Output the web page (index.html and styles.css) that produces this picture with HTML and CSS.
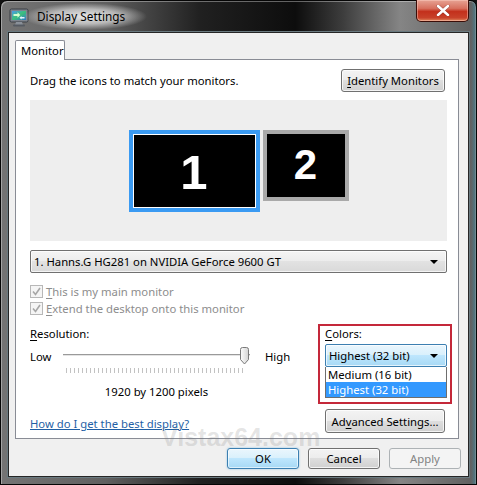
FILE: index.html
```html
<!DOCTYPE html>
<html lang="en">
<head>
    <meta charset="UTF-8">
    <title>Display Settings</title>
    <link rel="stylesheet" href="styles.css">
</head>
<body>
    <div class="window">
        <div class="titlebar">
            <svg class="app-icon" width="20" height="19" viewBox="0 0 20 19">
                <defs>
                    <linearGradient id="scr" x1="0" y1="0" x2="1" y2="1">
                        <stop offset="0" stop-color="#4a9ae8"/>
                        <stop offset="0.5" stop-color="#3cc07a"/>
                        <stop offset="1" stop-color="#2a72c8"/>
                    </linearGradient>
                </defs>
                <rect x="1" y="1" width="18" height="13" rx="1.5" fill="#7d848e" stroke="#3a3e45"/>
                <rect x="3" y="3" width="14" height="9" fill="url(#scr)"/>
                <path d="M4.5 6 h4 v-1.8 l2.8 2.8 l-2.8 2.8 v-1.8 h-4 z" fill="#d6ffd0"/>
                <path d="M15.5 9 h-3 v-1 l-2 1.7 l2 1.7 v-1 h3 z" fill="#e4f2ff"/>
                <path d="M7 14 h6 l1 3 h-8 z" fill="#8a9099"/>
                <rect x="4" y="16.5" width="12" height="2" rx="1" fill="#555a62"/>
            </svg>
            <span class="title">Display Settings</span>
            <div class="close">
                <svg width="14" height="11" viewBox="0 0 14 11">
                    <path d="M2 1 L12 10 M12 1 L2 10" stroke="#5a1010" stroke-width="3.6" stroke-linecap="round" opacity="0.45"/>
                    <path d="M2 1 L12 10 M12 1 L2 10" stroke="#ffffff" stroke-width="2.6" stroke-linecap="round"/>
                </svg>
            </div>
        </div>

        <div class="client">
            <div class="tabs">
                <div class="tab">Monitor</div>
            </div>

            <div class="panel">
                <div class="top-row">
                    <span>Drag the icons to match your monitors.</span>
                    <button class="btn btn-identify"><u>I</u>dentify Monitors</button>
                </div>

                <div class="arrange">
                    <div class="monitors">
                        <div class="monitor monitor-main">1</div>
                        <div class="monitor monitor-second">2</div>
                    </div>
                </div>

                <div class="combo">
                    <span>1. Hanns.G HG281 on NVIDIA GeForce 9600 GT</span>
                    <span class="arrow"></span>
                </div>

                <div class="checks">
                    <div class="check">
                        <span class="box">
                            <svg width="9" height="9" viewBox="0 0 9 9"><path d="M1 4.5 L3.5 7.5 L8 1" fill="none" stroke="#a7a7a7" stroke-width="1.6"/></svg>
                        </span>
                        <span><u>T</u>his is my main monitor</span>
                    </div>
                    <div class="check">
                        <span class="box">
                            <svg width="9" height="9" viewBox="0 0 9 9"><path d="M1 4.5 L3.5 7.5 L8 1" fill="none" stroke="#a7a7a7" stroke-width="1.6"/></svg>
                        </span>
                        <span><u>E</u>xtend the desktop onto this monitor</span>
                    </div>
                </div>

                <div class="lower">
                    <div class="resolution">
                        <div class="label"><u>R</u>esolution:</div>
                        <div class="slider-row">
                            <span class="slider-end">Low</span>
                            <div class="slider">
                                <div class="track"></div>
                                <svg class="thumb" width="11" height="18" viewBox="0 0 11 18">
                                    <defs>
                                        <linearGradient id="thm" x1="0" y1="0" x2="1" y2="0">
                                            <stop offset="0" stop-color="#fdfdfd"/>
                                            <stop offset="1" stop-color="#d4d4d4"/>
                                        </linearGradient>
                                    </defs>
                                    <path d="M1.5 2.5 Q1.5 0.5 3.5 0.5 H7.5 Q9.5 0.5 9.5 2.5 V12.5 L5.5 17 L1.5 12.5 Z" fill="url(#thm)" stroke="#7a7a7a"/>
                                </svg>
                                <div class="ticks"></div>
                            </div>
                            <span>High</span>
                        </div>
                        <div class="pixels">1920 by 1200 pixels</div>
                        <a class="help" href="#">How do I get the best display?</a>
                    </div>

                    <div class="side">
                        <div class="colors">
                            <div class="label"><u>C</u>olors:</div>
                            <div class="combo combo-focus">
                                <span>Highest (32 bit)</span>
                                <span class="arrow"></span>
                            </div>
                            <ul class="list">
                                <li>Medium (16 bit)</li>
                                <li class="selected">Highest (32 bit)</li>
                            </ul>
                        </div>
                        <button class="btn btn-advanced">Ad<u>v</u>anced Settings...</button>
                    </div>
                </div>
            </div>

            <div class="buttons">
                <button class="btn btn-dialog btn-default">OK</button>
                <button class="btn btn-dialog">Cancel</button>
                <button class="btn btn-dialog" disabled>Apply</button>
            </div>

            <div class="watermark">Vistax64.com</div>
        </div>
    </div>
</body>
</html>
```

FILE: styles.css
```css
* {
    margin: 0;
    padding: 0;
    box-sizing: border-box;
}

body {
    width: 477px;
    height: 485px;
    overflow: hidden;
    background: #111;
    font-family: 'Noto Sans', 'Open Sans', sans-serif;
    font-size: 11.3px;
    color: #000;
}

u {
    text-decoration: underline;
    text-underline-offset: 2px;
}

.window {
    width: 477px;
    height: 485px;
    display: flex;
    flex-direction: column;
    border: 1px solid #050505;
    border-radius: 7px 7px 0 0;
    background:
        linear-gradient(90deg, rgba(0, 0, 0, 0) 0, rgba(0, 0, 0, 0) 470px, rgba(70, 140, 160, 0.55) 474px, rgba(0, 0, 0, 0.2) 476px),
        linear-gradient(90deg, #747474 0, #606060 22%, #202020 42%, #0d0d0d 62%, #3d3d3d 72%, #858585 84%, #5e5e5e 100%);
    box-shadow: inset 1px 1px 0 rgba(255, 255, 255, 0.35), inset -1px 0 0 rgba(255, 255, 255, 0.2);
}

/* title bar */

.titlebar {
    height: 31px;
    display: flex;
    align-items: flex-start;
    padding: 0 7px 0 8px;
}

.app-icon {
    margin-top: 7px;
    flex-shrink: 0;
}

.title {
    margin: 2px 0 0 -6px;
    padding: 5px 22px 6px 14px;
    font-size: 11.8px;
    color: #000;
    background: radial-gradient(ellipse closest-side, rgba(238, 238, 238, 0.95) 0%, rgba(218, 218, 218, 0.72) 55%, rgba(200, 200, 200, 0) 100%);
}

.close {
    margin-left: auto;
    margin-top: -1px;
    width: 53px;
    height: 22px;
    display: flex;
    align-items: center;
    justify-content: center;
    border: 1px solid #3a0d08;
    border-top: none;
    border-radius: 0 0 5px 5px;
    background: linear-gradient(#e7a394 0%, #d7705e 40%, #c3301c 55%, #c8422a 85%, #e08a60 100%);
    box-shadow: inset 0 0 0 1px rgba(255, 210, 200, 0.45);
}

/* client area */

.client {
    flex: 1;
    position: relative;
    margin: 0 7px 7px;
    padding: 7px 9px 0 6px;
    background: #f0f0f0;
    border: 1px solid #262626;
    box-shadow: 0 0 0 1px #6a7a80;
}

.tabs {
    display: flex;
    position: relative;
    z-index: 1;
}

.tab {
    width: 50px;
    height: 20px;
    padding: 1px 0 0 5px;
    line-height: 17px;
    background: #fff;
    border: 1px solid #898c95;
    border-bottom: none;
    border-radius: 2px 2px 0 0;
}

.panel {
    height: 380px;
    margin-top: -1px;
    padding: 9px 11px 0 14px;
    background: #fff;
    border: 1px solid #898c95;
    display: flex;
    flex-direction: column;
}

.top-row {
    height: 23px;
    display: flex;
    align-items: center;
    justify-content: space-between;
    padding-right: 2px;
}

/* buttons */

.btn {
    font: inherit;
    color: #000;
    height: 23px;
    border: 1px solid #707070;
    border-radius: 3px;
    background: linear-gradient(#f3f3f3 0%, #ececec 48%, #dedede 50%, #d0d0d0 100%);
    box-shadow: inset 0 0 0 1px rgba(255, 255, 255, 0.75);
}

.btn-identify {
    width: 104px;
}

.btn-advanced {
    width: 120px;
    height: 24px;
    margin: 5px 0 0 7px;
}

.btn-dialog {
    width: 72px;
    height: 21px;
}

.btn-default {
    border-color: #3c7fb1;
    background: linear-gradient(#eaf6fd 0%, #d9f0fc 48%, #bee6fd 50%, #a7d9f5 100%);
    box-shadow: inset 0 0 0 1px rgba(255, 255, 255, 0.6), 0 0 2px rgba(60, 160, 220, 0.6);
}

.btn:disabled {
    color: #838383;
    border-color: #adb2b5;
    background: #f4f4f4;
    box-shadow: none;
}

/* monitor arrangement */

.arrange {
    height: 141px;
    margin-top: 8px;
    background: #eeeeee;
    display: flex;
    align-items: center;
    justify-content: center;
}

.monitors {
    display: flex;
    align-items: flex-start;
    gap: 3px;
}

.monitor {
    display: flex;
    align-items: center;
    justify-content: center;
    background: #000;
    color: #fff;
    font-family: 'Liberation Sans', Arial, sans-serif;
    font-weight: bold;
}

.monitor-main {
    width: 131px;
    height: 82px;
    border: 4px solid #3a9af2;
    box-shadow: inset 0 0 0 1px #fff;
    font-size: 49px;
    padding-top: 3px;
}

.monitor-second {
    width: 86px;
    height: 71px;
    border: 4px solid #a9a9a9;
    font-size: 42px;
}

/* combo boxes */

.combo {
    height: 23px;
    margin-top: 9px;
    padding: 0 8px 0 3px;
    display: flex;
    align-items: center;
    justify-content: space-between;
    border: 1px solid #707070;
    border-radius: 2px;
    background: linear-gradient(#f4f4f4 0%, #ececec 48%, #e2e2e2 50%, #d9d9d9 100%);
    box-shadow: inset 0 0 0 1px rgba(255, 255, 255, 0.7);
}

.arrow {
    width: 0;
    height: 0;
    border-left: 4px solid transparent;
    border-right: 4px solid transparent;
    border-top: 4px solid #000;
}

.combo-focus {
    margin-top: 2px;
    border-color: #3c7fb1;
    background: linear-gradient(#eaf6fd 0%, #d9f0fc 48%, #bee6fd 50%, #a7d9f5 100%);
}

/* checkboxes */

.checks {
    margin-top: 10px;
    color: #8d8d8d;
}

.check {
    height: 17px;
    display: flex;
    align-items: center;
    gap: 3px;
}

.box {
    width: 13px;
    height: 13px;
    display: flex;
    align-items: center;
    justify-content: center;
    border: 1px solid #b8b8b8;
    background: #f5f5f5;
}

/* resolution + colors */

.lower {
    display: flex;
    margin-top: 7px;
}

.resolution {
    flex: 1;
    display: flex;
    flex-direction: column;
    padding-top: 2px;
}

.label {
    height: 16px;
    line-height: 16px;
}

.slider-row {
    height: 18px;
    margin-top: 5px;
    display: flex;
    align-items: center;
}

.slider-end {
    width: 22px;
}

.slider {
    position: relative;
    width: 187px;
    height: 18px;
    margin: 0 15px 0 11px;
}

.track {
    margin-top: 7px;
    height: 3px;
    border-top: 1px solid #9a9a9a;
    border-bottom: 1px solid #fff;
    background: #e4e4e4;
}

.thumb {
    position: absolute;
    right: 0;
    top: 0;
}

.ticks {
    position: absolute;
    left: 3px;
    right: 4px;
    top: 21px;
    height: 5px;
    background: repeating-linear-gradient(90deg, #c2c2c2 0, #c2c2c2 1px, transparent 1px, transparent 4px);
}

.pixels {
    width: 187px;
    margin: 19px 0 0 33px;
    text-align: center;
    line-height: 16px;
}

.help {
    margin-top: auto;
    margin-bottom: 1px;
    line-height: 16px;
    color: #1f5fa5;
    text-decoration: underline;
}

.side {
    display: flex;
    flex-direction: column;
    margin-right: -5px;
}

.colors {
    width: 134px;
    padding: 0 3px 4px 5px;
    border: 2px solid #c4283a;
}

.list {
    list-style: none;
    border: 1px solid #6e6e6e;
    border-top: none;
    background: #fff;
}

.list li {
    height: 15px;
    line-height: 15px;
    padding-left: 2px;
}

.list .selected {
    background: #3399ff;
    color: #fff;
}

/* dialog buttons */

.buttons {
    display: flex;
    justify-content: flex-end;
    gap: 9px;
    margin: 9px -2px 0 0;
}

.watermark {
    position: absolute;
    left: 152px;
    top: 390px;
    font-family: 'Liberation Sans', Arial, sans-serif;
    font-weight: bold;
    font-size: 25px;
    color: rgba(120, 120, 120, 0.2);
    pointer-events: none;
}
```
